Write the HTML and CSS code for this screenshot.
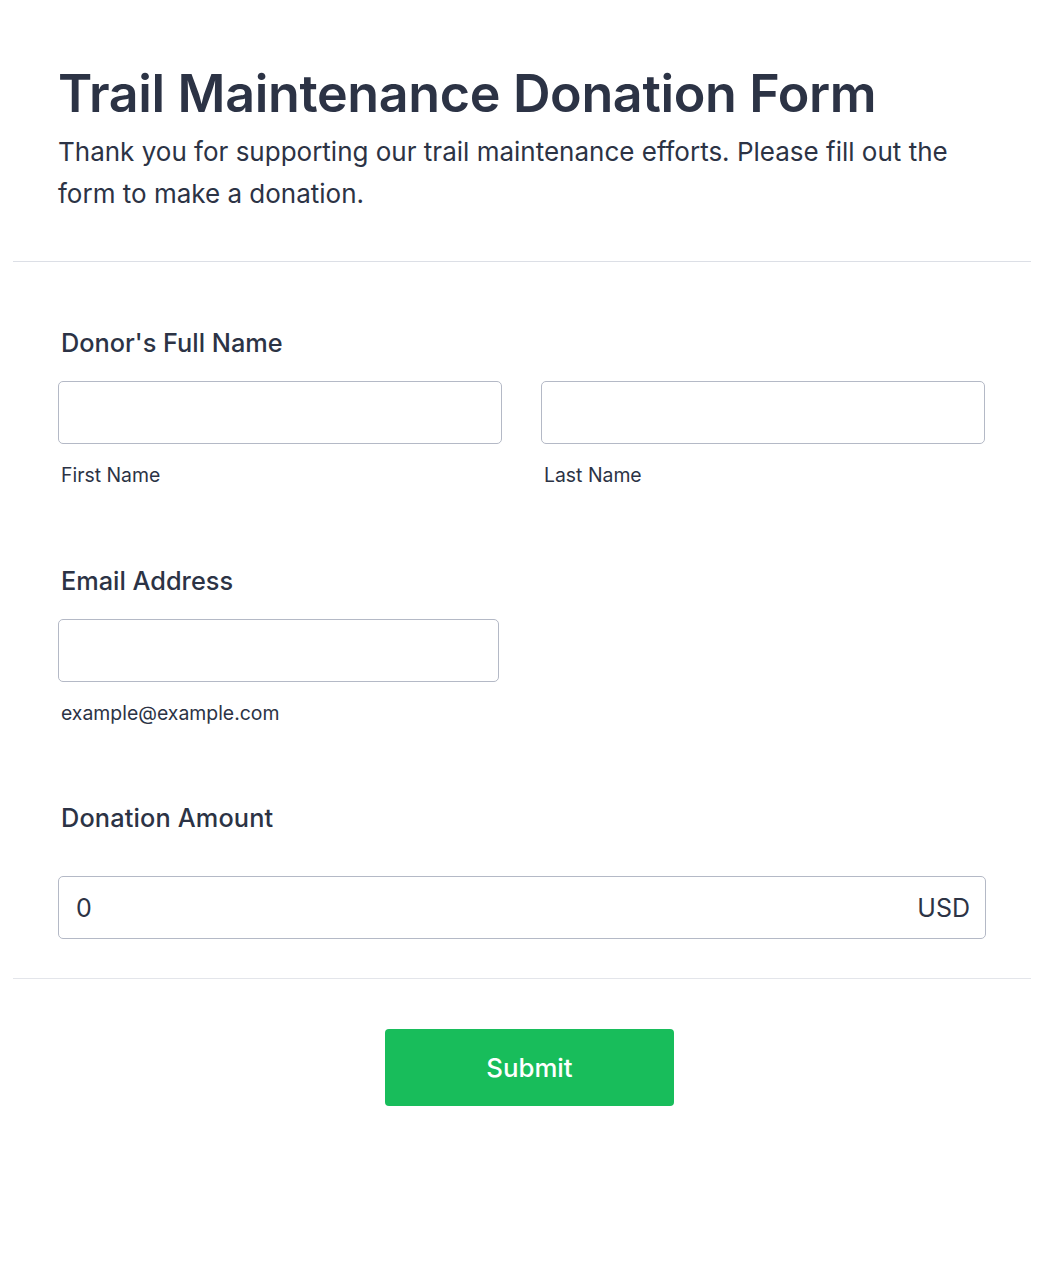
FILE: index.html
```html
<!DOCTYPE html>
<html lang="en">
<head>
<meta charset="utf-8">
<title>Trail Maintenance Donation Form</title>
<link rel="stylesheet" href="styles.css">
</head>
<body>
<main class="form">
  <header class="form-header">
    <h1 class="form-title">Trail Maintenance Donation Form</h1>
    <p class="form-subtitle">Thank you for supporting our trail maintenance efforts. Please fill out the form to make a donation.</p>
  </header>
  <section class="form-body">
    <div class="field">
      <label class="field-label">Donor's Full Name</label>
      <div class="name-row">
        <div class="sub">
          <input class="input" type="text">
          <span class="sub-label">First Name</span>
        </div>
        <div class="sub">
          <input class="input" type="text">
          <span class="sub-label">Last Name</span>
        </div>
      </div>
    </div>
    <div class="field">
      <label class="field-label">Email Address</label>
      <div class="sub email">
        <input class="input" type="email">
        <span class="sub-label">example@example.com</span>
      </div>
    </div>
    <div class="field amount-field">
      <label class="field-label">Donation Amount</label>
      <div class="amount">
        <span class="amount-value">0</span>
        <span class="amount-currency">USD</span>
      </div>
    </div>
  </section>
  <footer class="form-footer">
    <button class="submit" type="button">Submit</button>
  </footer>
</main>
</body>
</html>
```

FILE: styles.css
```css
* { box-sizing: border-box; }
html, body { margin: 0; background: #fff; }
body {
  font-family: Inter, "Noto Sans", sans-serif;
  color: #2c3345;
}
.form {
  margin: 0 13px;
}
.form-header {
  padding: 62px 45px 46px;
  border-bottom: 1px solid #dcdfe6;
}
.form-title {
  margin: 0;
  font-size: 52px;
  font-weight: 600;
  line-height: 64px;
  letter-spacing: -0.35px;
}
.form-subtitle {
  margin: 5px 0 0;
  font-size: 26px;
  line-height: 42px;
}
.form-body {
  padding: 65px 45px 39px;
  border-bottom: 1px solid #e3e5ea;
  display: flex;
  flex-direction: column;
  gap: 77.5px;
}
.field-label {
  display: block;
  font-size: 25.3px;
  line-height: 32px;
  font-weight: 500;
  padding-left: 3px;
  margin-bottom: 22px;
}
.amount-field .field-label { letter-spacing: 0.15px; margin-bottom: 42px; }
.name-row {
  display: flex;
  gap: 39px;
}
.sub {
  display: flex;
  flex-direction: column;
  width: 444px;
}
.sub.email { width: 441px; }
.input {
  height: 63px;
  width: 100%;
  border: 1px solid #b4b9c6;
  border-radius: 5px;
  background: #fff;
  font: inherit;
}
.sub-label {
  font-size: 19.4px;
  line-height: 24px;
  margin-top: 19px;
  padding-left: 3px;
}
.amount {
  height: 63px;
  width: 928px;
  border: 1px solid #b4b9c6;
  border-radius: 5px;
  display: flex;
  justify-content: space-between;
  align-items: center;
  padding: 0 15px 0 17px;
  font-size: 25px;
}
.form-footer {
  display: flex;
  justify-content: center;
  padding: 50px 0 49px 15px;
}
.submit {
  width: 289px;
  height: 77px;
  background: #18bd5b;
  border: none;
  border-radius: 4px;
  color: #fff;
  font-family: inherit;
  font-size: 25.8px;
  font-weight: 500;
}
```
